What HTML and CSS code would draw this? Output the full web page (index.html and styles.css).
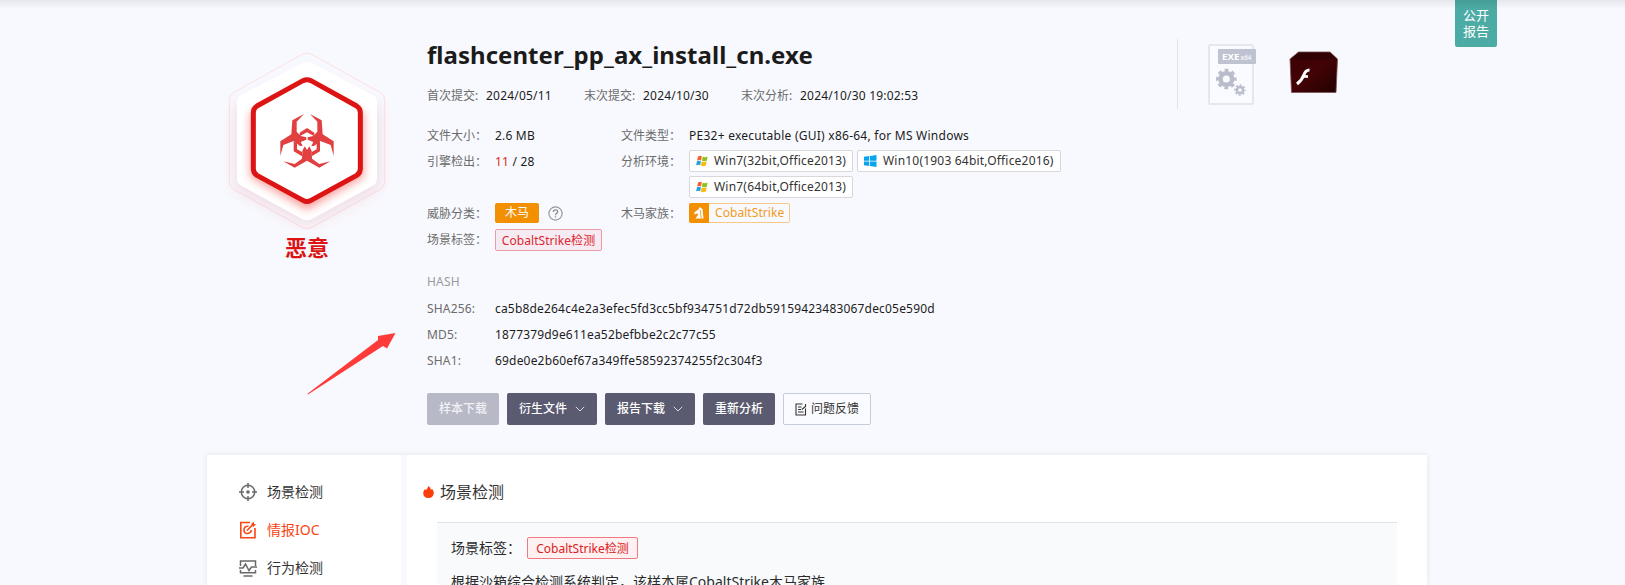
FILE: index.html
```html
<!DOCTYPE html>
<html lang="zh-CN">
<head>
<meta charset="utf-8">
<title>flashcenter_pp_ax_install_cn.exe</title>
<link rel="stylesheet" href="styles.css">
</head>
<body>
<svg class="defs" width="0" height="0">
  <symbol id="win7" viewBox="0 0 12 12">
    <path d="M2 1.6Q4 .3 5.8 1.3L5 5.4Q3.200 4.500 1.100 5.500z" fill="#f4622c"/>
    <path d="M6.600 1.700Q9 2.700 11.600 1.600L10.800 5.700Q8.400 6.800 5.900 5.800z" fill="#8cc11f"/>
    <path d="M1 6.300Q3 5.300 4.900 6.300L4.100 10.300Q2.200 9.300.100 10.300z" fill="#1b9fe8"/>
    <path d="M5.700 6.600Q8.200 7.600 10.700 6.500L9.800 10.500Q7.300 11.700 4.900 10.600z" fill="#fdbb11"/>
  </symbol>
  <symbol id="chev" viewBox="0 0 10 6"><path d="M.8.8 5 5 9.200.8" fill="none" stroke="#d9d9e0" stroke-width="1"/></symbol>
</svg>
<div class="page">
  <section class="hero">
    <div class="verdict">
      <svg class="hexagon" viewBox="0 0 630 600" width="210" height="200">
        <defs>
          <filter id="soft" x="-30%" y="-30%" width="160%" height="160%"><feGaussianBlur stdDeviation="22"/></filter>
          <filter id="glow" x="-30%" y="-30%" width="160%" height="160%"><feGaussianBlur stdDeviation="13"/></filter>
        </defs>
        <path d="M307 73Q321 66 335 73L540 187Q554 196 554 212V454Q554 470 540 478L335 592Q321 600 307 592L102 478Q88 470 88 454V212Q88 196 102 187z" fill="#f8f9fe" stroke="#fde0e1" stroke-width="3"/>
        <path d="M321 128 535 232V474L321 586 107 474V232z" fill="#c93a5a" opacity=".17" filter="url(#soft)"/>
        <path d="M306 99Q321 91 336 99L517 194Q531 202 531 218V446Q531 460 517 468L336 567Q321 575 306 567L125 468Q111 460 111 446V218Q111 202 125 194z" fill="#fff"/>
        <path d="M321 160 491 250V442L321 540 151 442V250z" fill="#f03a36" opacity=".48" filter="url(#glow)"/>
        <path d="M309 152Q321 146 333 152L470 228Q481 235 481 248V416Q481 429 470 436L333 511Q321 518 309 511L171 436Q160 429 160 416V248Q160 235 171 228z" fill="#fff" stroke="#dc1414" stroke-width="15"/>
        <g fill="#e23f41">
          <path d="M312 252 277 271 274 313 241 334 241 378 250 345 281 333 300 348 308 348 302 336 319 329 319 322 302 318 290 305 290 275z"/>
          <path d="M330 252 365 271 368 313 401 334 401 378 392 345 361 333 342 348 334 348 340 336 323 329 323 322 340 318 352 305 352 275z"/>
          <path d="M250 394 284 413 321 392 358 413 391 394 358 402 336 386 335 363 328 349 321 360 314 349 307 363 306 386 284 402z"/>
          <path d="M299 308 321 294 343 308 343 319 321 307 299 319z"/>
          <path d="M281 333 291 340 291 358 306 366 306 379 281 364z"/>
          <path d="M360 333 350 340 350 358 335 366 335 379 360 364z"/>
        </g>
      </svg>
      <div class="verdict-text">恶意</div>
    </div>
    <div class="info">
      <h1 class="filename">flashcenter_pp_ax_install_cn.exe</h1>
      <div class="dates">
        <div class="date"><span class="dim">首次提交:</span><span class="latin">2024/05/11</span></div>
        <div class="date"><span class="dim">末次提交:</span><span class="latin">2024/10/30</span></div>
        <div class="date"><span class="dim">末次分析:</span><span class="latin">2024/10/30 19:02:53</span></div>
      </div>
      <div class="facts">
        <span class="dim">文件大小：</span><div class="latin">2.6 MB</div>
        <span class="dim">文件类型：</span><div class="ftype">PE32+ executable (GUI) x86-64, for MS Windows</div>
        <span class="dim">引擎检出：</span><div class="latin"><span class="hit">11</span> / 28</div>
        <span class="dim">分析环境：</span>
        <div class="envs">
          <span class="env w7"><svg width="12" height="12"><use href="#win7"/></svg>Win7(32bit,Office2013)</span>
          <span class="env w10"><svg width="13" height="12" viewBox="0 0 13 12"><path d="M0 1.700 5.200 1V5.700H0zM6 .9 12.500 0V5.700H6zM0 6.400H5.200V11L0 10.300zM6 6.400H12.500V12L6 11.100z" fill="#0aa3ee"/></svg>Win10(1903 64bit,Office2016)</span>
          <span class="env w7"><svg width="12" height="12"><use href="#win7"/></svg>Win7(64bit,Office2013)</span>
        </div>
        <span class="dim">威胁分类：</span>
        <div class="threat"><span class="trojan">木马</span><svg width="15" height="15" viewBox="0 0 15 15"><circle cx="7.500" cy="7.500" r="6.600" fill="none" stroke="#96979b" stroke-width="1.200"/><path d="M5.300 6Q5.300 3.800 7.500 3.800T9.700 5.700Q9.700 6.700 8.500 7.400Q7.500 8 7.500 9.200M7.500 10.200V11.500" fill="none" stroke="#8b8c91" stroke-width="1.300"/></svg></div>
        <span class="dim">木马家族：</span>
        <div class="family"><span class="family-icon"><svg width="12" height="14" viewBox="0 0 12 14"><path d="M1.300 6.500 5.800 3 6.500 1 9.500 3 10.500 12.500H2.500L5.500 8 3.500 7.500 1.500 8.500z" fill="#fff"/><path d="M7.200 4 8.300 12.500" stroke="#f39002" fill="none" stroke-width=".8"/></svg></span><span class="family-name">CobaltStrike</span></div>
        <span class="dim">场景标签：</span><div class="wide"><span class="scene">CobaltStrike检测</span></div>
      </div>
      <div class="hashes">
        <div class="hash-title">HASH</div>
        <div class="hash"><span class="dim">SHA256:</span><span>ca5b8de264c4e2a3efec5fd3cc5bf934751d72db59159423483067dec05e590d</span></div>
        <div class="hash"><span class="dim">MD5:</span><span>1877379d9e611ea52befbbe2c2c77c55</span></div>
        <div class="hash"><span class="dim">SHA1:</span><span>69de0e2b60ef67a349ffe58592374255f2c304f3</span></div>
      </div>
      <div class="actions">
        <span class="btn off">样本下载</span>
        <span class="btn drop">衍生文件<svg width="10" height="6"><use href="#chev"/></svg></span>
        <span class="btn drop">报告下载<svg width="10" height="6"><use href="#chev"/></svg></span>
        <span class="btn">重新分析</span>
        <span class="btn plain"><svg width="12" height="13" viewBox="0 0 12 13"><path d="M7.500 1H1V12H10.500V5.500M3 4H6.500M3 6.500H6M3 9H8.500M10.500 1V3.500L6.800 6.500" fill="none" stroke="#333" stroke-width="1.100"/></svg>问题反馈</span>
      </div>
    </div>
    <div class="kind">
      <svg width="50" height="64" viewBox="0 0 50 64">
        <rect x="1" y="2" width="44" height="59" rx="1.500" fill="#fafbff" stroke="#e4e6f0" stroke-width="2"/>
        <rect x="10" y="6" width="38" height="15" rx="1" fill="#bfc2d0"/>
        <text x="14" y="17.300" class="exe" textLength="17.500" lengthAdjust="spacingAndGlyphs">EXE</text><text x="32.500" y="17.300" class="x64" textLength="11" lengthAdjust="spacingAndGlyphs">x64</text>
        <g fill="none" stroke="#b9bdcb">
          <circle cx="18.300" cy="36" r="5.800" stroke-width="4.500"/>
          <circle cx="18.300" cy="36" r="8.900" stroke-width="2.800" stroke-dasharray="3.700 3.290" stroke-dashoffset="1.850"/>
          <circle cx="32" cy="47" r="3.100" stroke-width="2.500"/>
          <circle cx="32" cy="47" r="5" stroke-width="1.600" stroke-dasharray="2 1.927" stroke-dashoffset="1"/>
        </g>
      </svg>
      <svg width="50" height="44" viewBox="0 0 50 44">
        <defs><linearGradient id="flash" x1="0" y1="0" x2="1" y2="1"><stop offset="0" stop-color="#3a0204"/><stop offset=".5" stop-color="#430305"/><stop offset="1" stop-color="#210103"/></linearGradient></defs>
        <path d="M9.500 2H41L48.500 9 47 42.500H2.500L1 9z" fill="url(#flash)" stroke="#7a5557" stroke-width=".8"/>
        <path d="M2 9 9.800 2.500H40.800L48 9Q25 11 2 9z" fill="#260103" opacity=".55"/>
        <path d="M20.500 20Q16.500 20 14.800 25T8 34" fill="none" stroke="#fff" stroke-width="3"/><path d="M13.500 26.500H19" stroke="#fff" stroke-width="2.600"/>
      </svg>
    </div>
    <div class="public">公开<br>报告</div>
    <svg class="arrow" width="90" height="62" viewBox="0 0 90 62"><path d="M.5 60.700 71 7 71 3 88.500 0 80 15.500 76 13 1 61.500z" fill="#ff3b3a"/></svg>
  </section>
  <div class="report">
    <nav class="side">
      <div class="nav"><svg width="18" height="18" viewBox="0 0 18 18" fill="none" stroke="#696969" stroke-width="1.500"><circle cx="9" cy="9" r="6.700"/><path d="M9 0V5M9 13V18M0 9H5M13 9H18"/><circle cx="9" cy="9" r="1.800" fill="#696969" stroke="none"/></svg>场景检测</div>
      <div class="nav active"><svg width="18" height="18" viewBox="0 0 18 18" fill="none" stroke="#fa4515" stroke-width="1.600"><path d="M11 1.500H1.800V16.800H16V7"/><path d="M9.500 5Q5 5.200 5 9T8.500 12.500 12.500 9M8 9.500 14.500 3"/><path d="M12 3 15 .8V3H17L14.500 6z" fill="#fa4515" stroke="none"/></svg>情报IOC</div>
      <div class="nav"><svg width="18" height="18" viewBox="0 0 18 18" fill="none" stroke="#696969" stroke-width="1.500"><path d="M1.500 7V2H16.500V7M1.500 11V13.800H16.500V11M0 9H4L6.500 5 10 11.500 12.500 8H18M4.500 17H13.500"/></svg>行为检测</div>
    </nav>
    <main class="detail">
      <h2 class="detail-title"><svg width="11" height="12" viewBox="0 0 11 12"><path d="M5.200 0Q8 1.500 8 4L9 2.800Q11 5 10.800 7.300 10.300 12 5.500 12 .500 11.800.200 7.500 0 5 2 3L3 4.200Q4.800 2.500 5.200 0z" fill="#fb3c0b"/></svg>场景检测</h2>
      <div class="panel">
        <div class="panel-row">场景标签：<span class="panel-tag">CobaltStrike检测</span></div>
        <p class="panel-text">根据沙箱综合检测系统判定，该样本属CobaltStrike木马家族</p>
      </div>
    </main>
  </div>
</div>
</body>
</html>
```
FILE: styles.css
```css
* { box-sizing: border-box; }
html, body { height: 585px; overflow: hidden; }
body {
  margin: 0;
  background: #f8f9fe;
  font: 12px/20px "Noto Sans", "Noto Sans CJK SC", sans-serif;
  color: #1c1c1c;
}
.defs { display: block; height: 0; }
.page {
  height: 585px;
  padding-left: 207px;
  overflow: hidden;
  background: linear-gradient(rgba(40,45,60,.09), rgba(40,45,60,0) 9px);
}
svg { flex: none; }
.hero { position: relative; display: flex; width: 1220px; height: 455px; }
.verdict { width: 220px; padding-top: 30px; text-align: center; }
.hexagon { display: block; margin-left: -7px; }
.verdict-text { width: 200px; padding-top: 2px; font-size: 22px; line-height: 30px; font-weight: 700; color: #dc1414; }
.info { width: 750px; padding-top: 35px; }
.filename { margin: 0; height: 40px; font-size: 24px; line-height: 40px; font-weight: 700; letter-spacing: .04px; white-space: nowrap; color: #1b1b1b; }
.dates { display: flex; height: 20px; margin-top: 11px; }
.date { display: flex; flex: none; width: 157px; white-space: nowrap; }
.date .dim { flex: none; width: 59px; }
.latin { letter-spacing: .2px; }
.ftype { letter-spacing: .25px; }
.dim { color: #6b6b6b; white-space: nowrap; }
.facts {
  display: grid;
  grid-template-columns: 68px 126px 68px 400px;
  grid-auto-rows: minmax(26px, auto);
  line-height: 26px;
  margin-top: 17px;
}
.hit { color: #dc2c20; }
.envs { display: flex; flex-wrap: wrap; gap: 4px; padding: 1px 0 3px; }
.env { display: flex; align-items: center; gap: 6px; height: 22px; padding-left: 6px; border: 1px solid #d8d8da; border-radius: 2px; background: #fff; color: #333; letter-spacing: .2px; white-space: nowrap; line-height: 20px; }
.w7 { width: 164px; }
.w10 { width: 204px; }
.threat { display: flex; align-items: center; gap: 9px; height: 24px; }
.trojan { width: 44px; height: 20px; border-radius: 2px; background: #f39002; color: #fff; line-height: 20px; text-align: center; }
.family { display: flex; align-items: center; height: 24px; line-height: 18px; }
.family-icon { display: flex; align-items: center; justify-content: center; width: 20px; height: 20px; border-radius: 2px 0 0 2px; background: #f39002; }
.family-name { width: 81px; height: 20px; border: 1px solid #f8c885; border-left: 0; border-radius: 0 2px 2px 0; padding-left: 6px; color: #f39a1d; letter-spacing: .06px; }
.wide { grid-column: span 3; }
.scene { display: block; width: 107px; height: 22px; margin-top: 2px; border: 1px solid #ee9ba3; border-radius: 2px; background: #f6ebf2; color: #dc2630; letter-spacing: .06px; line-height: 21px; text-align: center; white-space: nowrap; }
.hashes { margin-top: 19px; letter-spacing: .18px; }
.hash-title { height: 27px; color: #98999c; }
.hash { display: flex; height: 26px; white-space: nowrap; }
.hash .dim { width: 68px; }
.actions { display: flex; gap: 8px; margin-top: 16px; }
.btn { display: flex; align-items: center; justify-content: center; width: 72px; height: 32px; border-radius: 2px; background: #5a5a70; color: #fff; font-weight: 500; white-space: nowrap; }
.off { background: #b8b9c6; color: #f1f1f5; }
.drop { width: 90px; gap: 8px; }
.plain { width: 88px; gap: 4px; border: 1px solid #c5cddb; background: #fafbff; color: #333; font-weight: 400; }
.kind { display: flex; gap: 31px; height: 70px; margin-top: 39px; padding: 4px 0 0 30px; border-left: 1px solid #e2e4ea; }
.kind svg + svg { margin-top: 7px; }
.exe { font: 700 9.5px "Noto Sans", sans-serif; fill: #fff; }
.x64 { font: 700 6.5px "Noto Sans", sans-serif; fill: #eef0f6; }
.public { position: absolute; left: 1248px; top: 0; width: 42px; height: 47px; padding-top: 7px; border-radius: 0 0 2px 2px; background: linear-gradient(#449c95, #4caba4 9px); color: #fff; font-size: 13px; line-height: 16px; text-align: center; }
.arrow { position: absolute; left: 100px; top: 333px; }
.report { display: flex; width: 1220px; height: 130px; background: #fff; box-shadow: 0 0 5px rgba(60,70,90,.12); }
.side { width: 200px; padding-top: 18px; border-right: 6px solid #f8f9fe; }
.nav { display: flex; align-items: center; gap: 10px; height: 38px; padding-left: 32px; font-size: 14px; color: #333; }
.active { color: #fa4515; }
.detail { flex: 1; padding: 0 30px 0 16px; }
.detail-title { display: flex; align-items: center; gap: 6px; height: 67px; margin: 0; padding-top: 7px; font-size: 16px; font-weight: 400; color: #333; }
.panel { height: 80px; margin-left: 14px; padding: 12px 14px 0; border-top: 1px solid #dfe3ed; background: #f8fafc; font-size: 14px; line-height: 26px; color: #2b2b2b; white-space: nowrap; }
.panel-row { display: flex; align-items: center; height: 26px; }
.panel-tag { width: 111px; height: 22px; margin-left: 6px; border: 1px solid #f07a80; border-radius: 2px; background: #fff1f1; color: #dc2024; font-size: 12px; line-height: 21px; text-align: center; }
.panel-text { margin: 8px 0 0; }
```
